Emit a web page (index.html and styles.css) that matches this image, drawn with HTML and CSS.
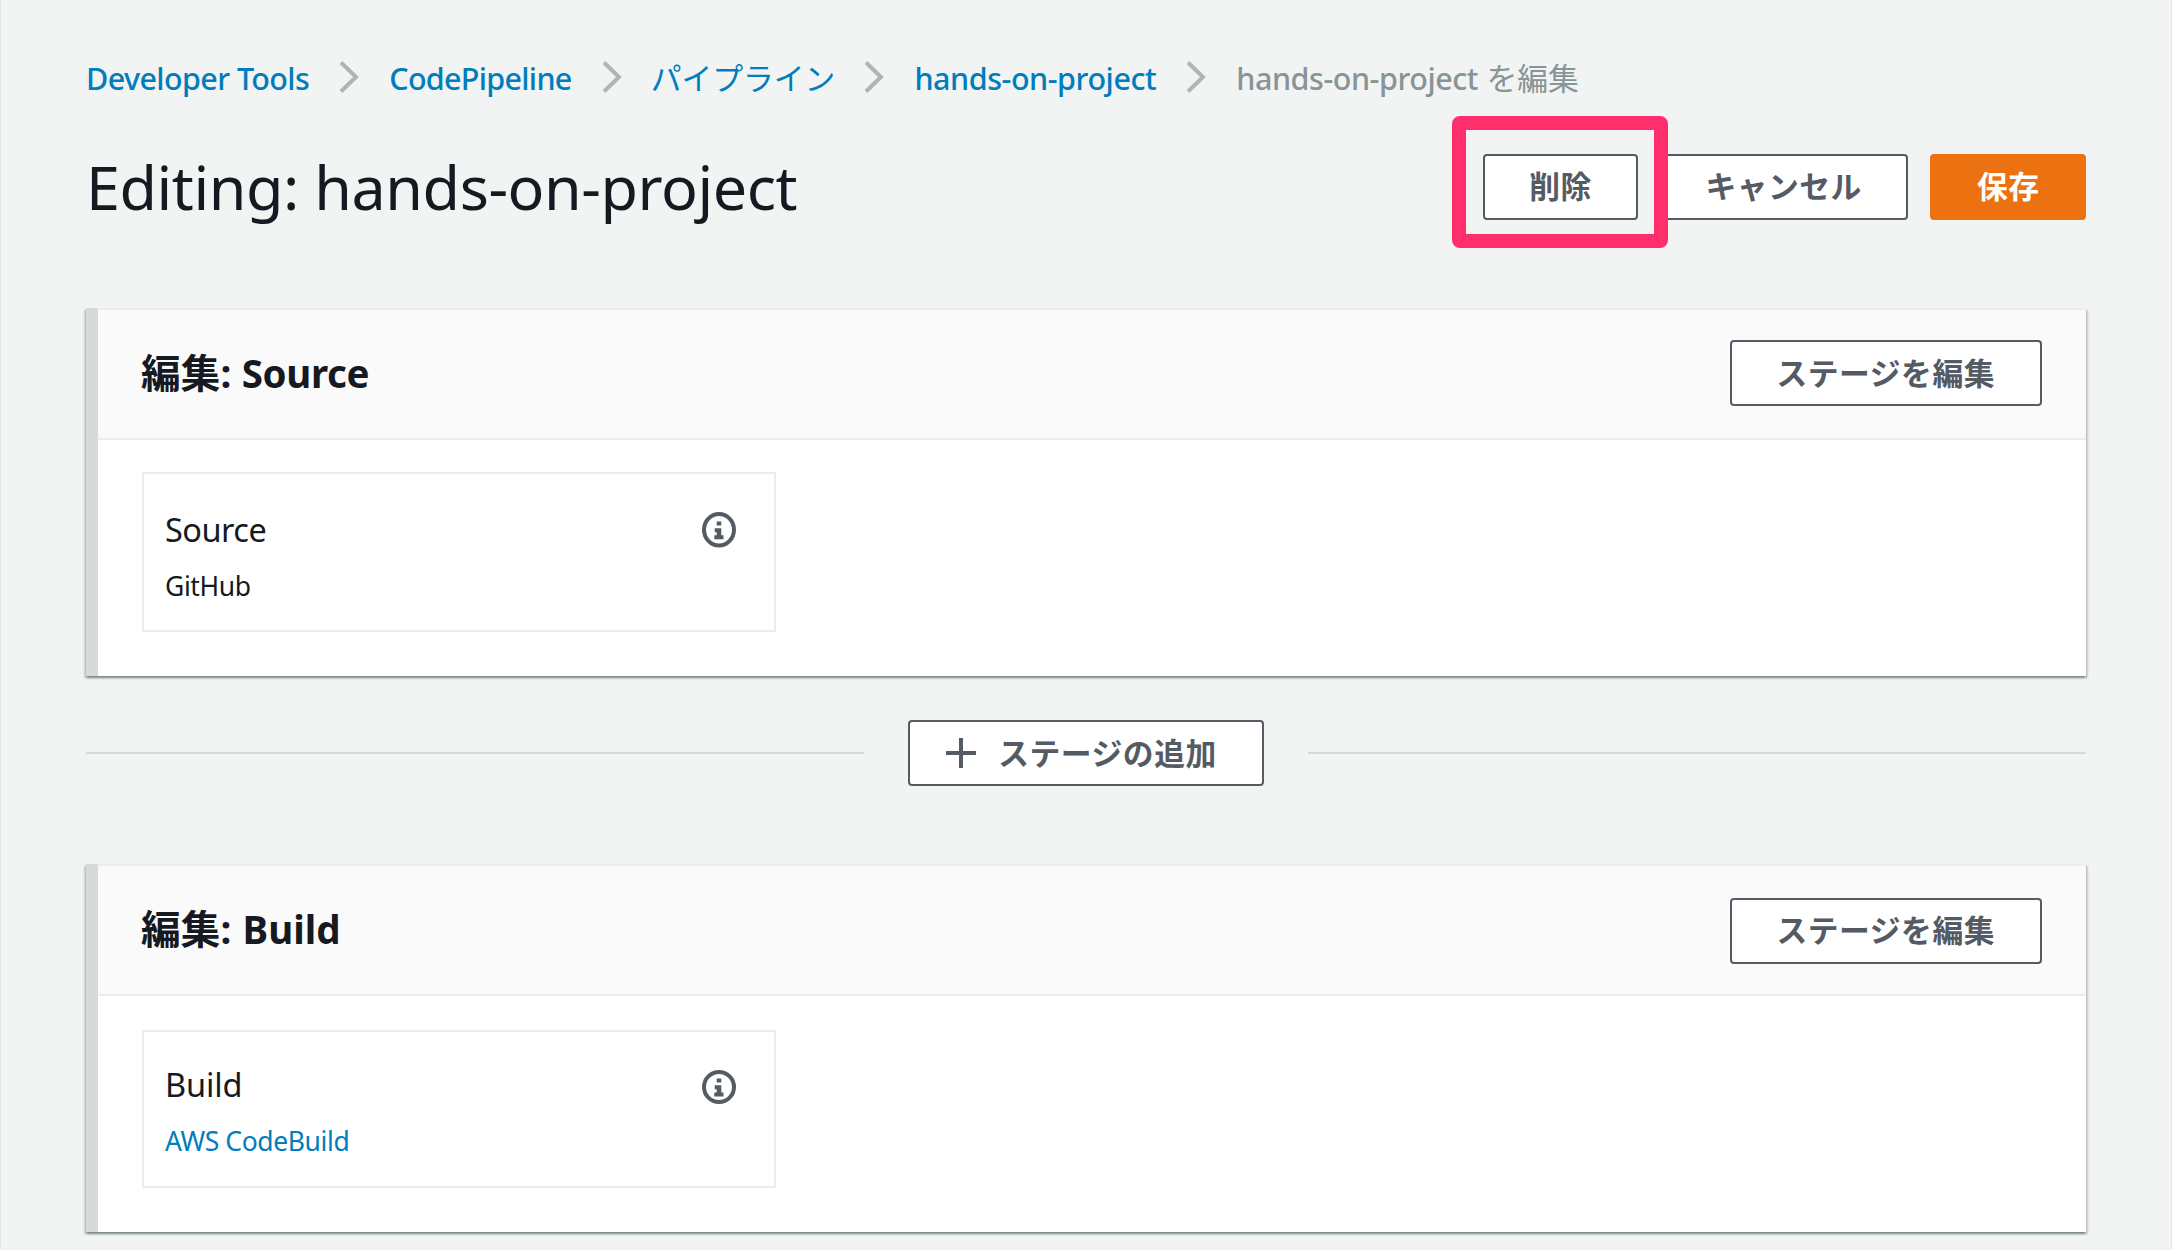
FILE: index.html
```html
<!DOCTYPE html>
<html lang="ja">
<head>
<meta charset="utf-8">
<title>Editing: hands-on-project</title>
<link rel="stylesheet" href="styles.css">
</head>
<body>
<main class="page">
  <nav class="breadcrumb">
    <a class="crumb" href="#">Developer Tools</a>
    <svg class="chevron" viewBox="0 0 20 32"><path d="M2 1.5 17 16 2 30.5"/></svg>
    <a class="crumb crumb-service" href="#">CodePipeline</a>
    <svg class="chevron" viewBox="0 0 20 32"><path d="M2 1.5 17 16 2 30.5"/></svg>
    <a class="crumb crumb-ja" href="#">パイプライン</a>
    <svg class="chevron" viewBox="0 0 20 32"><path d="M2 1.5 17 16 2 30.5"/></svg>
    <a class="crumb crumb-project" href="#">hands-on-project</a>
    <svg class="chevron" viewBox="0 0 20 32"><path d="M2 1.5 17 16 2 30.5"/></svg>
    <span class="crumb crumb-project crumb-current">hands-on-project <span class="crumb-suffix">を編集</span></span>
  </nav>

  <header class="title-bar">
    <h1 class="title">Editing: hands-on-project</h1>
    <div class="actions">
      <div class="marked">
        <button class="btn">削除</button>
        <span class="marker"></span>
      </div>
      <button class="btn">キャンセル</button>
      <button class="btn btn-primary">保存</button>
    </div>
  </header>

  <section class="stage">
    <div class="stage-header">
      <h2 class="stage-title"><span class="stage-ja">編集</span>: Source</h2>
      <button class="btn btn-edit">ステージを編集</button>
    </div>
    <div class="stage-body">
      <div class="action-card">
        <div class="action-text">
          <div class="action-name">Source</div>
          <div class="provider">GitHub</div>
        </div>
        <svg class="info" viewBox="0 0 34 36"><ellipse cx="17" cy="17.7" rx="15" ry="15.7"/><path d="M14.7 9.5h4.6v4h-4.6zM12.7 16.2h6.6v7h2.2v4h-9.2v-4h2.4v-3h-2z"/></svg>
      </div>
    </div>
  </section>

  <div class="add-row">
    <span class="rule"></span>
    <button class="btn btn-add">
      <svg class="plus" viewBox="0 0 30 30"><path d="M0 15h30M15 0v30"/></svg>
      ステージの追加
    </button>
    <span class="rule"></span>
  </div>

  <section class="stage stage-build">
    <div class="stage-header">
      <h2 class="stage-title"><span class="stage-ja">編集</span>: Build</h2>
      <button class="btn btn-edit">ステージを編集</button>
    </div>
    <div class="stage-body">
      <div class="action-card">
        <div class="action-text">
          <div class="action-name">Build</div>
          <a class="provider" href="#">AWS CodeBuild</a>
        </div>
        <svg class="info" viewBox="0 0 34 34"><circle cx="17" cy="17" r="15"/><path d="M14.7 8.5h4.6v4h-4.6zM12.7 15.2h6.6v7.3h2.2v4h-9.2v-4h2.4v-3.3h-2z"/></svg>
      </div>
    </div>
  </section>
</main>
</body>
</html>
```
FILE: styles.css
```css
* {
  box-sizing: border-box;
}

body {
  margin: 0;
  background: #f2f3f3;
  color: #16191f;
  font-family: "Noto Sans", "Noto Sans CJK JP", sans-serif;
}

a {
  color: #007dbc;
  text-decoration: none;
}

.page {
  height: 1250px;
  padding: 56px 85px 0;
  overflow: hidden;
  border: solid #e6e8e8;
  border-width: 0 1px;
}

.breadcrumb {
  display: flex;
  align-items: center;
  gap: 30px;
  height: 44px;
}

.crumb {
  font-size: 30.5px;
  font-weight: 500;
  line-height: 44px;
  letter-spacing: -0.6px;
  white-space: nowrap;
}

.crumb-service {
  letter-spacing: -0.7px;
}

.crumb-project {
  letter-spacing: -0.45px;
}

.crumb-current {
  color: #879596;
}

.crumb-ja,
.crumb-suffix {
  font-size: 30.8px;
  font-weight: 400;
  letter-spacing: 0;
}

.crumb-ja {
  margin-left: -1px;
  margin-right: -1px;
}

.crumb-suffix {
  margin-left: 1px;
}

.chevron {
  flex: none;
  width: 20px;
  height: 32px;
  margin-top: -2px;
  fill: none;
  stroke: #aab7b8;
  stroke-width: 4;
}

.title-bar {
  display: flex;
  align-items: center;
  justify-content: space-between;
  height: 66px;
  margin-top: 54px;
}

.title {
  margin: 0;
  font-size: 61px;
  font-weight: 400;
  line-height: 66px;
  letter-spacing: -0.45px;
}

.actions {
  display: flex;
  gap: 22px;
}

.btn {
  height: 66px;
  padding: 0 45px 2px;
  border: 2px solid #545b64;
  border-radius: 4px;
  background: #fff;
  color: #545b64;
  font-family: "Noto Sans", "Noto Sans CJK JP", sans-serif;
  font-size: 30.8px;
  font-weight: 700;
  line-height: 60px;
  letter-spacing: 0.5px;
  white-space: nowrap;
}

.actions .btn {
  padding: 0 44.5px 3px;
}

.actions .btn-primary {
  border-color: #ec7211;
  background: #ec7211;
  color: #fff;
}

.btn-edit {
  padding-bottom: 0;
}

.marked {
  position: relative;
  margin-right: -1.5px;
}

.marker {
  position: absolute;
  inset: -38px -30px -28px -31px;
  border: 14px solid #ff2e6d;
  border-radius: 8px;
}

.stage {
  height: 368px;
  margin-top: 88px;
  border-left: 12px solid #d5dbdb;
  background: #fff;
  box-shadow: 0 2px 2px 0 rgba(0, 28, 36, 0.3), 2px 2px 2px 0 rgba(0, 28, 36, 0.15), -2px 2px 2px 0 rgba(0, 28, 36, 0.15);
}

.stage-header {
  display: flex;
  align-items: center;
  justify-content: space-between;
  height: 132px;
  padding: 0 44px 2px 43px;
  border-top: 2px solid #eaeded;
  border-bottom: 2px solid #eaeded;
  background: #fafafa;
}

.stage-title {
  margin: 0;
  font-size: 38.5px;
  font-weight: 700;
  line-height: 66px;
  letter-spacing: -0.4px;
  word-spacing: 1.2px;
}

.stage-ja {
  font-size: 39.6px;
  letter-spacing: 0.2px;
}

.stage-body {
  padding: 32px 44px 0;
}

.action-card {
  display: flex;
  justify-content: space-between;
  width: 634px;
  height: 160px;
  padding: 34px 38px 0 21px;
  border: 2px solid #eaeded;
}

.action-name {
  font-size: 32.5px;
  line-height: 44px;
  letter-spacing: -0.5px;
}

.provider {
  display: block;
  margin-top: 16px;
  font-size: 26.5px;
  line-height: 36px;
  letter-spacing: -0.4px;
}

.info {
  width: 34px;
  height: 36px;
  margin-top: 4px;
  fill: #545b64;
}

.info ellipse,
.info circle {
  fill: none;
  stroke: #545b64;
  stroke-width: 4;
}

.add-row {
  display: flex;
  align-items: center;
  gap: 44px;
  margin-top: 44px;
}

.rule {
  flex: 1;
  height: 2px;
  background: #d5dbdb;
}

.btn-add {
  display: flex;
  align-items: center;
  gap: 22px;
  padding: 0 45px 0 36px;
}

.plus {
  width: 30px;
  height: 30px;
  stroke: #545b64;
  stroke-width: 4;
}

.stage-build {
  margin-top: 78px;
}

.stage-build .action-name {
  letter-spacing: -0.1px;
}

.stage-build .stage-title {
  letter-spacing: 0;
}

.stage-build .btn {
  margin-top: 4px;
  padding-bottom: 4px;
}

.stage-build .stage-body {
  padding-top: 34px;
}

.stage-build .action-card {
  height: 158px;
  padding-top: 31px;
}

.stage-build .info {
  height: 34px;
  margin-top: 7px;
}
```
